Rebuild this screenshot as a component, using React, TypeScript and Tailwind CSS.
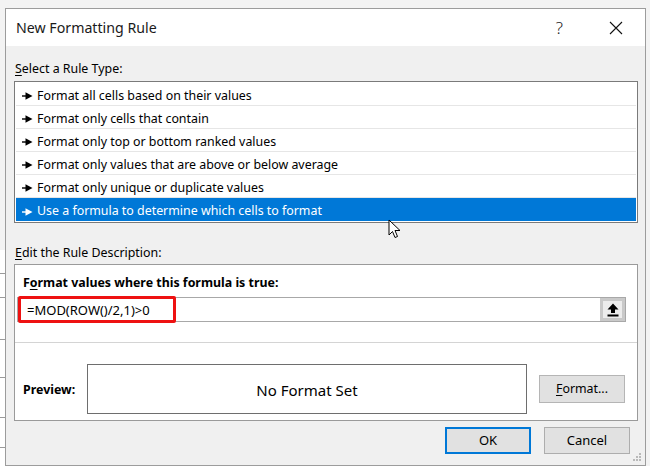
import React from 'react';

const rules = [
    'Format all cells based on their values',
    'Format only cells that contain',
    'Format only top or bottom ranked values',
    'Format only values that are above or below average',
    'Format only unique or duplicate values',
    'Use a formula to determine which cells to format',
];

function Pointer({ color }: { color: string }) {
    return (
        <svg width="11" height="8" viewBox="0 0 11 8" className="shrink-0">
            <rect x="0" y="3.3" width="5" height="1.4" fill={color} />
            <path d="M3.5 0.3 L10.5 4 L3.5 7.7 Z" fill={color} />
        </svg>
    );
}

export default function App() {
    return (
        <div
            className="relative w-[650px] h-[466px] overflow-hidden bg-[#f3f3f3] pt-[8px] pl-[5px]"
            style={{ fontFamily: '"Noto Sans", "Liberation Sans", sans-serif' }}
        >
            {/* sheet behind the dialog */}
            <div className="absolute left-0 top-[250px] w-[5px] h-[216px] bg-white flex flex-col">
                <div className="h-[24px] border-b border-[#9a9a9a]" />
                <div className="h-[24px] border-b border-[#9a9a9a]" />
                <div className="h-[42px] border-b border-[#9a9a9a]" />
                <div className="h-[38px] border-b border-[#9a9a9a]" />
                <div className="h-[40px] border-b border-[#9a9a9a]" />
                <div className="h-[30px] border-b border-[#9a9a9a]" />
            </div>

            <div className="relative w-[641px] h-[458px] border border-[#9c9c9c] bg-[#f0f0f0] text-[12.4px] text-black flex flex-col">
                {/* title bar */}
                <div className="h-[37px] bg-white flex items-center pl-[10px] shrink-0">
                    <span className="text-[14.2px] text-[#1a1a1a]">New Formatting Rule</span>
                    <span className="ml-auto mr-[46px] text-[17px] font-light text-[#222]">?</span>
                    <svg width="14" height="14" viewBox="0 0 14 14" className="mr-[22px]">
                        <path d="M1 1 L13 13 M13 1 L1 13" stroke="#111" strokeWidth="1.1" />
                    </svg>
                </div>

                <div className="flex flex-col px-[8px]">
                    <div className="mt-[15px] h-[16px] leading-[16px] pl-[1px]">
                        <span className="underline underline-offset-2">S</span>elect a Rule Type:
                    </div>

                    {/* rule type list */}
                    <div className="relative mt-[4px] w-[624px] border border-[#7a7a7a] bg-white p-[1px]">
                        {rules.map((r, i) => {
                            const selected = i === rules.length - 1;
                            return (
                                <div
                                    key={r}
                                    className={
                                        selected
                                            ? 'h-[23px] flex items-center gap-[4px] pl-[6px] pt-[4px] bg-[#0078d7] text-white'
                                            : 'h-[23px] flex items-center gap-[4px] pl-[6px] pt-[4px] border-b border-[#e6e6e6]'
                                    }
                                >
                                    <Pointer color={selected ? '#ffffff' : '#000000'} />
                                    <span>{r}</span>
                                </div>
                            );
                        })}
                    </div>

                    <div className="mt-[22px] h-[16px] leading-[16px] pl-[1px]">
                        <span className="underline underline-offset-2">E</span>dit the Rule Description:
                    </div>

                    {/* rule description */}
                    <div className="mt-[3px] w-[624px] h-[157px] border border-[#9a9a9a] bg-white flex flex-col">
                        <div className="mt-[10px] pl-[8px] h-[16px] leading-[16px] font-bold">
                            F<span className="underline underline-offset-2">o</span>rmat values where this formula is true:
                        </div>
                        <div className="relative mt-[6px] ml-[2px] w-[609px] h-[25px] border border-[#a8a8a8] flex items-center">
                            <span className="pl-[9px] pt-[2px] text-[13px]">=MOD(ROW()/2,1)&gt;0</span>
                            <div className="ml-auto w-[25px] h-[23px] border-[3px] border-[#c9c9c9] bg-[#ececec] flex items-center justify-center">
                                <svg width="12" height="14" viewBox="0 0 12 14">
                                    <path d="M6 0.5 L11.5 6.5 L8 6.5 L8 10 L4 10 L4 6.5 L0.5 6.5 Z" fill="#000" />
                                    <rect x="0.5" y="11.5" width="11" height="2" fill="#000" />
                                </svg>
                            </div>
                            <div className="absolute left-[0px] top-[-2px] w-[158px] h-[27px] border-[3px] border-[#ee1111] rounded-[2px]" />
                        </div>
                        <div className="mt-[20px] h-px bg-[#d4d4d4]" />
                        <div className="mt-[21px] flex items-center pl-[8px]">
                            <span className="font-bold w-[64px] pt-[2px]">Preview:</span>
                            <div className="w-[440px] h-[50px] border border-[#6e6e6e] flex items-center justify-center pt-[2px] text-[15px]">
                                No Format Set
                            </div>
                            <div className="ml-[12px] w-[86px] h-[28px] border border-[#b5b5b5] bg-[#e1e1e1] flex items-center justify-center">
                                <span className="underline underline-offset-2">F</span>ormat...
                            </div>
                        </div>
                    </div>

                    {/* dialog buttons */}
                    <div className="mt-[6px] flex justify-end pr-[7px] gap-[13px]">
                        <div className="w-[86px] h-[27px] border-2 border-[#0078d7] bg-[#e1e1e1] flex items-center justify-center text-[13px]">
                            OK
                        </div>
                        <div className="w-[86px] h-[27px] border border-[#adadad] bg-[#e1e1e1] flex items-center justify-center text-[13px]">
                            Cancel
                        </div>
                    </div>
                </div>

                {/* resize grip */}
                <svg width="9" height="9" viewBox="0 0 9 9" className="absolute right-[4px] bottom-[4px]">
                    <rect x="7" y="1" width="2" height="2" fill="#b9b9b9" />
                    <rect x="4" y="4" width="2" height="2" fill="#b9b9b9" />
                    <rect x="7" y="4" width="2" height="2" fill="#b9b9b9" />
                    <rect x="1" y="7" width="2" height="2" fill="#b9b9b9" />
                    <rect x="4" y="7" width="2" height="2" fill="#b9b9b9" />
                    <rect x="7" y="7" width="2" height="2" fill="#b9b9b9" />
                </svg>
            </div>

            {/* mouse pointer */}
            <svg width="14" height="22" viewBox="0 0 14 22" className="absolute left-[388px] top-[219px]">
                <path
                    d="M1 1 L1 16 L4.5 12.5 L7 18.5 L9.5 17.5 L7 11.5 L12 11.5 Z"
                    fill="#fff"
                    stroke="#000"
                    strokeWidth="1"
                    strokeLinejoin="round"
                />
            </svg>
        </div>
    );
}
